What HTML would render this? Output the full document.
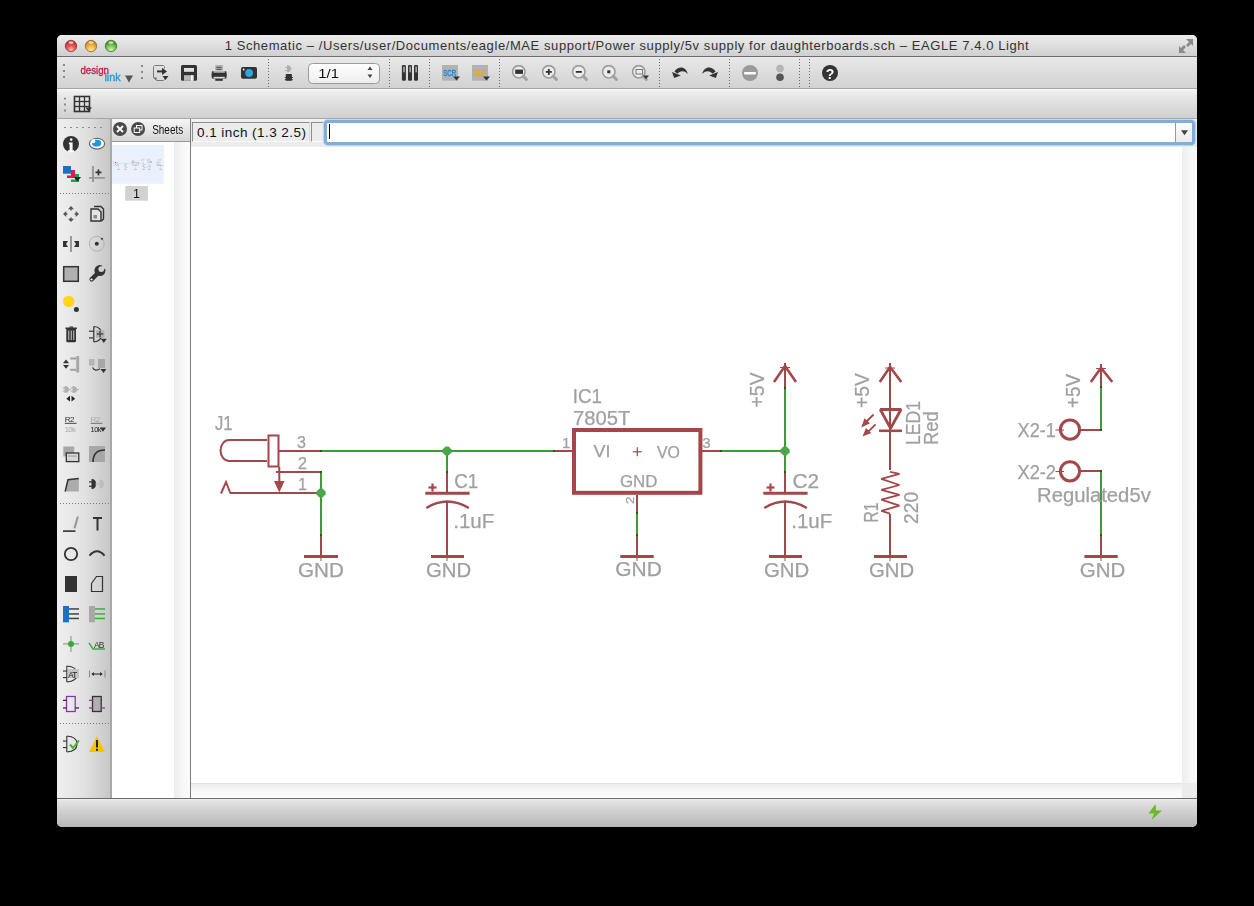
<!DOCTYPE html>
<html><head><meta charset="utf-8">
<style>
*{margin:0;padding:0;box-sizing:border-box}
html,body{width:1254px;height:906px;background:#000;overflow:hidden;font-family:"Liberation Sans",sans-serif}
.a{position:absolute}
#win{left:57px;top:35px;width:1140px;height:792px;background:#e6e6e6;border-radius:5px 5px 5px 5px;overflow:hidden}
#title{left:57px;top:35px;width:1140px;height:22px;background:linear-gradient(#ececec,#d0d0d0);border-bottom:1px solid #6f6f6f;border-radius:5px 5px 0 0}
#ttext{left:57px;top:38px;width:1140px;text-align:center;font-size:13px;color:#333;letter-spacing:0.58px;white-space:nowrap}
#tb1{left:57px;top:57px;width:1140px;height:32px;background:linear-gradient(#e8e8e8,#d2d2d2);border-bottom:1px solid #a6a6a6}
#tb2{left:57px;top:89px;width:1140px;height:30px;background:linear-gradient(#fafafa 0,#f0f0f0 2px,#e6e6e6 8px,#d0d0d0);border-bottom:1px solid #a6a6a6}
#pal{left:57px;top:119px;width:54px;height:679px;background:linear-gradient(90deg,#efefef 0,#e2e2e2 50%,#c6c6c6 100%)}
#sheets{left:110px;top:119px;width:81px;height:679px;background:#fff;border-left:2px solid #a8a8a8;border-right:1px solid #7c7c7c}
#shhead{left:112px;top:119px;width:78px;height:23px;background:linear-gradient(#f6f6f6,#d6d6d6);border-bottom:1px solid #9a9a9a}
#shstrip{left:174px;top:142px;width:16px;height:656px;background:linear-gradient(90deg,#ececec,#f8f8f8 60%,#fbfbfb)}
#cmd{left:191px;top:119px;width:1006px;height:28px;background:linear-gradient(#f6f6f6 0,#ececec 3px,#ececec)}
#canvas{left:191px;top:147px;width:991px;height:636px;background:#fff}
#vscroll{left:1182px;top:147px;width:15px;height:636px;background:linear-gradient(90deg,#ededed,#f6f6f6 50%,#fafafa)}
#hscroll{left:191px;top:783px;width:991px;height:15px;background:linear-gradient(#ededed,#f8f8f8 50%,#fcfcfc);border-top:1px solid #e2e2e2}
#corner{left:1182px;top:783px;width:15px;height:15px;background:#ececec}
#status{left:57px;top:798px;width:1140px;height:29px;background:linear-gradient(#f0f0f0 0,#e2e2e2 2px,#b6b6b6);border-top:1px solid #6b6b6b;border-radius:0 0 5px 5px}
.fld{background:#ececec;border-top:1px solid #8e8e8e;border-left:1px solid #8e8e8e;border-right:1px solid #dcdcdc;border-bottom:1px solid #fafafa}
#grid{left:192px;top:122px;width:118px;height:20px;font-size:13.5px;color:#111;padding:2px 0 0 4px;letter-spacing:0.45px;white-space:nowrap;line-height:16px}
#fld2{left:311px;top:122px;width:13px;height:20px}
#input{left:324px;top:120px;width:871px;height:25px;border:3px solid #7eaedb;border-radius:4px;background:#fff;box-shadow:0 0 1px 1px #b8d3ee}
#ddbtn{left:1175px;top:123px;width:17px;height:19px;border-left:1px solid #9a9a9a;background:linear-gradient(#fdfdfd,#ebebeb);border-radius:0 3px 3px 0}
#cursor{left:329px;top:124px;width:1px;height:15px;background:#000}
.t{position:absolute;white-space:nowrap;line-height:1}
</style></head><body>
<div id="win" class="a"></div>
<div id="title" class="a"></div>
<div id="ttext" class="a">1 Schematic – /Users/user/Documents/eagle/MAE support/Power supply/5v supply for daughterboards.sch – EAGLE 7.4.0 Light</div>
<div id="tb1" class="a"></div>
<div id="tb2" class="a"></div>
<div id="pal" class="a"></div>
<div id="sheets" class="a"></div>
<div id="shhead" class="a"></div>
<div id="shstrip" class="a"></div>
<div id="cmd" class="a"></div>
<div id="canvas" class="a"></div>
<div id="vscroll" class="a"></div>
<div id="hscroll" class="a"></div>
<div id="corner" class="a"></div>
<div id="status" class="a"></div>
<div id="grid" class="a fld">0.1 inch (1.3 2.5)</div>
<div id="fld2" class="a fld"></div>
<div id="input" class="a"></div>
<div id="ddbtn" class="a"></div>
<div id="cursor" class="a"></div>
<!--SVG--><svg class="a" style="left:0;top:0;will-change:transform" width="1254" height="906" viewBox="0 0 1254 906">
<defs>
<radialGradient id="gr" cx="50%" cy="85%" r="75%"><stop offset="0" stop-color="#fbc0b8"/><stop offset="0.5" stop-color="#ee5550"/><stop offset="1" stop-color="#b8302c"/></radialGradient>
<radialGradient id="gy" cx="50%" cy="85%" r="75%"><stop offset="0" stop-color="#fde9a0"/><stop offset="0.5" stop-color="#f4b648"/><stop offset="1" stop-color="#c47e1a"/></radialGradient>
<radialGradient id="gg" cx="50%" cy="85%" r="75%"><stop offset="0" stop-color="#d6f3b4"/><stop offset="0.5" stop-color="#80c85a"/><stop offset="1" stop-color="#3c8a28"/></radialGradient>
<symbol id="mag" viewBox="0 0 18 18"><circle cx="7" cy="7" r="6.2" fill="#ececec" stroke="#9c9c9c" stroke-width="1.6"/><line x1="11.3" y1="11.3" x2="14.6" y2="14.6" stroke="#a2a2a2" stroke-width="3" stroke-linecap="round"/></symbol>
<symbol id="hdots" viewBox="0 0 4 20"><rect x="0" y="0" width="2" height="2" fill="#8a8a8a"/><rect x="0" y="6" width="2" height="2" fill="#8a8a8a"/><rect x="0" y="12" width="2" height="2" fill="#8a8a8a"/></symbol>
<pattern id="vdot" width="3" height="3" patternUnits="userSpaceOnUse"><rect width="1" height="1" fill="#6a6a6a"/></pattern>
<pattern id="hdot" width="3" height="3" patternUnits="userSpaceOnUse"><rect width="1" height="1" fill="#7a7a7a"/></pattern>
<linearGradient id="spin" x1="0" y1="0" x2="0" y2="1"><stop offset="0" stop-color="#ffffff"/><stop offset="1" stop-color="#ededed"/></linearGradient><pattern id="pdot6" width="6" height="2" patternUnits="userSpaceOnUse"><rect width="2" height="1" fill="#8a8a8a"/></pattern></defs>
<!-- traffic lights -->
<circle cx="71" cy="46" r="5.7" fill="url(#gr)" stroke="#8e3532" stroke-width="0.8"/>
<circle cx="91" cy="46" r="5.7" fill="url(#gy)" stroke="#9a6a1c" stroke-width="0.8"/>
<circle cx="111" cy="46" r="5.7" fill="url(#gg)" stroke="#3a7226" stroke-width="0.8"/>
<ellipse cx="71" cy="42.6" rx="2.6" ry="1.3" fill="#fff" opacity="0.65"/>
<ellipse cx="91" cy="42.6" rx="2.6" ry="1.3" fill="#fff" opacity="0.65"/>
<ellipse cx="111" cy="42.6" rx="2.6" ry="1.3" fill="#fff" opacity="0.65"/>
<!-- fullscreen -->
<path d="M1186,39 L1193,39 L1193,46 L1191,44 L1188,47 L1186,45 L1189,42 Z" fill="#8a8a8a"/>
<path d="M1179,46 L1181,48 L1184,45 L1186,47 L1183,50 L1186,53 L1179,53 Z" fill="#8a8a8a"/>
<!-- toolbar1 -->
<use href="#hdots" x="63" y="64" width="4" height="20"/>
<text x="80.4" y="73.5" font-family="Liberation Sans" font-size="11.5" fill="#c4204c" stroke="#c4204c" stroke-width="0.35" textLength="28.6" lengthAdjust="spacingAndGlyphs">design</text>
<text x="104.4" y="81" font-family="Liberation Sans" font-size="11" fill="#2a98cc" stroke="#2a98cc" stroke-width="0.35" textLength="16.2" lengthAdjust="spacingAndGlyphs">link</text>
<path d="M125,75.5 L133,75.5 L129,82.5 Z" fill="#555"/>
<use href="#hdots" x="141" y="65" width="4" height="20"/>
<!-- open -->
<path d="M164.5,68.5 L164.5,66.5 L163.5,65.5 L154.5,65.5 L153.5,66.5 L153.5,77.5 L156.5,80.5 L163.5,80.5 L164.5,79.5 L164.5,76.5" fill="none" stroke="#7a7a7a" stroke-width="1"/>
<path d="M153.5,77.5 L156.5,77.5 L156.5,80.5 Z" fill="#666"/>
<rect x="157" y="70.4" width="6" height="2" fill="#333"/>
<path d="M162,67.8 L167,71.4 L162,75 Z" fill="#333"/>
<path d="M162.5,76 L168.5,76 L165.5,80 Z" fill="#333"/>
<!-- save -->
<rect x="181" y="65" width="16" height="15.8" rx="1.5" fill="#333"/>
<rect x="184" y="68" width="10" height="3.8" fill="#e2e2e2"/>
<rect x="184" y="75.2" width="10" height="5.6" fill="#b8b8b8"/>
<rect x="191" y="75.2" width="1.8" height="5.6" fill="#f4f4f4"/>
<!-- print -->
<rect x="215.3" y="65.2" width="7.5" height="5.2" fill="#a8a8a8"/>
<rect x="216.5" y="66.9" width="5" height="1" fill="#555"/>
<rect x="216.5" y="68.9" width="5" height="1" fill="#555"/>
<path d="M212,71.3 L226.3,71.3 Q227.3,74.8 226.3,78.6 L212,78.6 Q211,74.8 212,71.3 Z" fill="#333"/>
<rect x="213.5" y="71.3" width="11.3" height="1.3" fill="#d6d6d6"/>
<rect x="213.5" y="76.8" width="11.3" height="1.3" fill="#d6d6d6"/>
<rect x="215.3" y="79" width="7.5" height="1.8" fill="#333"/>
<!-- camera -->
<rect x="241" y="67" width="16" height="11.8" rx="1.8" fill="#333"/>
<circle cx="249.1" cy="73" r="3.9" fill="#2aa6e2"/>
<circle cx="243.6" cy="69.5" r="0.9" fill="#fff"/>
<line x1="268.5" y1="59" x2="268.5" y2="88" stroke="#6a6a6a" stroke-width="1" stroke-dasharray="1 2"/>
<!-- part -->
<path d="M287,65.2 Q291,65.5 291,68.7 Q291,72 287,72.2 Z" fill="#acacac"/>
<rect x="284.8" y="67" width="2.4" height="0.9" fill="#b8b8b8"/><rect x="284.8" y="70.1" width="2.4" height="0.9" fill="#b8b8b8"/><rect x="290.5" y="68.4" width="2" height="0.8" fill="#c0c0c0"/>
<rect x="285.8" y="73.9" width="6.1" height="6.9" rx="0.5" fill="#333"/>
<rect x="284.8" y="77" width="8" height="1" fill="#333"/><rect x="284.8" y="79.2" width="8" height="1" fill="#333"/>
<!-- spinbox -->
<rect x="308.5" y="63.5" width="71" height="20" rx="4" fill="url(#spin)" stroke="#9a9a9a" stroke-width="1"/>
<text x="318.3" y="78" font-family="Liberation Sans" font-size="13.5" fill="#111" textLength="20.7" lengthAdjust="spacingAndGlyphs">1/1</text>
<path d="M367.5,70 L372.5,70 L370,66.5 Z" fill="#444"/>
<path d="M367.5,74.5 L372.5,74.5 L370,78 Z" fill="#444"/>
<line x1="389.5" y1="59" x2="389.5" y2="88" stroke="#6a6a6a" stroke-width="1" stroke-dasharray="1 2"/>
<!-- library -->
<rect x="401.9" y="65" width="4" height="15.7" rx="1.2" fill="#333"/>
<rect x="408" y="65" width="4" height="15.7" rx="1.2" fill="#333"/>
<rect x="414" y="65" width="4" height="15.7" rx="1.2" fill="#333"/>
<rect x="403.5" y="66.5" width="1" height="5.8" fill="#f0f0f0"/>
<rect x="409.6" y="66.5" width="1" height="5.8" fill="#f0f0f0"/>
<rect x="415.6" y="66.5" width="1" height="5.8" fill="#f0f0f0"/>
<line x1="429.5" y1="59" x2="429.5" y2="88" stroke="#6a6a6a" stroke-width="1" stroke-dasharray="1 2"/>
<!-- SCR ULP -->
<rect x="442" y="65" width="16" height="15.7" fill="#b2b2b2"/>
<text x="443.2" y="76" font-family="Liberation Sans" font-size="8.5" fill="#1a80d2" stroke="#1a80d2" stroke-width="0.3" textLength="13" lengthAdjust="spacingAndGlyphs">SCR</text>
<path d="M453,76.5 L460,76.5 L456.5,80.5 Z" fill="#333"/>
<rect x="472" y="65" width="16" height="15.7" fill="#b2b2b2"/>
<text x="473" y="76" font-family="Liberation Sans" font-size="8.5" fill="#f5a01c" stroke="#f5a01c" stroke-width="0.3" textLength="13" lengthAdjust="spacingAndGlyphs">ULP</text>
<path d="M483,76.5 L490,76.5 L486.5,80.5 Z" fill="#333"/>
<line x1="499.5" y1="59" x2="499.5" y2="88" stroke="#6a6a6a" stroke-width="1" stroke-dasharray="1 2"/>
<!-- zooms -->
<use href="#mag" x="511.8" y="64.8" width="18" height="18"/>
<rect x="515.2" y="69.6" width="7.8" height="4.3" fill="#333"/>
<use href="#mag" x="541.8" y="64.8" width="18" height="18"/>
<rect x="545.8" y="71" width="6" height="1.8" fill="#333"/><rect x="547.9" y="68.9" width="1.8" height="6" fill="#333"/>
<use href="#mag" x="571.8" y="64.8" width="18" height="18"/>
<rect x="575.8" y="71" width="6" height="1.8" fill="#333"/>
<use href="#mag" x="601.8" y="64.8" width="18" height="18"/>
<rect x="607.3" y="70.3" width="3" height="3" fill="#333"/>
<use href="#mag" x="631.8" y="64.8" width="18" height="18"/>
<rect x="636" y="69.5" width="6.6" height="4.5" fill="none" stroke="#777" stroke-width="1"/>
<path d="M643,75.5 L649,75.5 L646,79 Z" fill="#333"/>
<line x1="659.5" y1="59" x2="659.5" y2="88" stroke="#6a6a6a" stroke-width="1" stroke-dasharray="1 2"/>
<!-- undo redo -->
<path d="M687.8,74 C686.5,68.5 682,66.2 677.5,68.5 C676,69.3 675,70.5 674.5,71.5 L677.5,73.8 C679.5,71 684,70 687.8,74 Z" fill="#333"/>
<path d="M672,72 L674.2,78 L680.8,75.4 Z" fill="#333"/>
<g transform="translate(1390,0) scale(-1,1)">
<path d="M687.8,74 C686.5,68.5 682,66.2 677.5,68.5 C676,69.3 675,70.5 674.5,71.5 L677.5,73.8 C679.5,71 684,70 687.8,74 Z" fill="#333"/>
<path d="M672,72 L674.2,78 L680.8,75.4 Z" fill="#333"/>
</g>
<line x1="729.5" y1="59" x2="729.5" y2="88" stroke="#6a6a6a" stroke-width="1" stroke-dasharray="1 2"/>
<!-- stop go -->
<circle cx="750" cy="73" r="8" fill="#9a9a9a"/>
<rect x="744" y="72" width="12" height="2.6" rx="1" fill="#fff"/>
<circle cx="780" cy="68.5" r="3.8" fill="#b4b4b4"/>
<circle cx="780" cy="77.3" r="3.8" fill="#555"/>
<line x1="799.5" y1="59" x2="799.5" y2="88" stroke="#6a6a6a" stroke-width="1" stroke-dasharray="1 2"/>
<line x1="809.5" y1="59" x2="809.5" y2="88" stroke="#6a6a6a" stroke-width="1" stroke-dasharray="1 2"/>
<!-- help -->
<circle cx="830" cy="73" r="8" fill="#333"/>
<text x="825.7" y="79" font-family="Liberation Sans" font-size="14" font-weight="bold" fill="#fff">?</text>
<!-- toolbar2 -->
<use href="#hdots" x="64" y="97.5" width="4" height="20"/>
<rect x="74.5" y="96.5" width="15" height="15" fill="none" stroke="#333" stroke-width="1.6"/>
<line x1="79.5" y1="96.5" x2="79.5" y2="111.5" stroke="#333" stroke-width="1.3"/>
<line x1="84.5" y1="96.5" x2="84.5" y2="111.5" stroke="#333" stroke-width="1.3"/>
<line x1="74.5" y1="101.5" x2="89.5" y2="101.5" stroke="#333" stroke-width="1.3"/>
<line x1="74.5" y1="106.5" x2="89.5" y2="106.5" stroke="#333" stroke-width="1.3"/>
<path d="M85.5,107.5 L92,107.5 L88.5,111.5 Z" fill="#333"/>
<!-- palette -->
<line x1="64" y1="127.5" x2="104" y2="127.5" stroke="#8a8a8a" stroke-width="1" stroke-dasharray="2 4"/>
<!-- info -->
<circle cx="71" cy="144" r="8" fill="#333"/>
<circle cx="71.2" cy="139.6" r="1.3" fill="#fff"/>
<path d="M68.8,142.6 L72.6,142.6 L72.6,150.3 L74.2,150.3 L74.2,152.2 L67.8,152.2 L67.8,150.3 L69.6,150.3 L69.6,144.2 L68.8,144.2 Z" fill="#fff"/>
<!-- eye -->
<ellipse cx="97" cy="143.7" rx="7.6" ry="5.4" fill="#fff" stroke="#6a6a6a" stroke-width="1.2"/>
<ellipse cx="96.6" cy="143.2" rx="4.6" ry="3.4" fill="#1a9ae2"/><circle cx="93.2" cy="141.2" r="2.1" fill="#fff"/>
<!-- layers -->
<rect x="63" y="166" width="8" height="7.7" fill="#2070c0"/>
<path d="M71,170 L75,170 L75,178 L67,178 L67,175.5 L71,175.5 Z" fill="#d81b50"/>
<path d="M75,174 L79,174 L79,182 L71,182 L71,179.5 L75,179.5 Z" fill="#1fa050"/>
<path d="M74,177 L81,177 L77.5,181.5 Z" fill="#222"/>
<!-- mark -->
<rect x="92" y="166" width="2" height="16" fill="#9a9a9a"/>
<rect x="89" y="177" width="16" height="1.8" fill="#9a9a9a"/>
<rect x="95.5" y="171.5" width="6" height="1.7" fill="#333"/><rect x="97.6" y="169.4" width="1.7" height="6" fill="#333"/>
<line x1="60" y1="193.5" x2="110" y2="193.5" stroke="#7a7a7a" stroke-width="1" stroke-dasharray="1 2"/>
<!-- move -->
<g fill="#555">
<path d="M71,206 L74,209.3 L68,209.3 Z"/><path d="M71,222 L74,218.7 L68,218.7 Z"/>
<path d="M63,214 L66.3,211 L66.3,217 Z"/><path d="M79,214 L75.7,211 L75.7,217 Z"/>
<rect x="70.3" y="209" width="1.4" height="1.5"/><rect x="70.3" y="217.5" width="1.4" height="1.5"/>
<rect x="66" y="213.3" width="1.5" height="1.4"/><rect x="74.5" y="213.3" width="1.5" height="1.4"/>
</g>
<!-- copy -->
<path d="M94,206.5 L101,206.5 L103.5,209 L103.5,219 L101.5,221" fill="none" stroke="#333" stroke-width="1.4"/>
<path d="M91,209 L98,209 L101,212 L101,221 L91,221 Z" fill="#e4e4e4" stroke="#333" stroke-width="1.4"/>
<rect x="93.5" y="215" width="3.5" height="3.5" fill="#888"/>
<!-- mirror -->
<rect x="70" y="236" width="2" height="16" fill="#9a9a9a"/>
<path d="M63,241 L68,241 L66,244 L68,247 L63,247 Z" fill="#333"/>
<path d="M79,241 L74,241 L76,244 L74,247 L79,247 Z" fill="#333"/>
<!-- rotate -->
<circle cx="96.8" cy="243.7" r="7.4" fill="none" stroke="#a8a8a8" stroke-width="0.8"/>
<circle cx="96.8" cy="243.7" r="2" fill="#333"/>
<path d="M100.5,238.5 L103.2,237.8 L102.2,240.6 Z" fill="#333"/>
<!-- group -->
<rect x="63.7" y="266.7" width="14.6" height="14.6" fill="#b0b0b0" stroke="#333" stroke-width="1.5"/>
<!-- wrench -->
<mask id="wm" maskUnits="userSpaceOnUse" x="85" y="260" width="25" height="25"><rect x="85" y="260" width="25" height="25" fill="#fff"/><circle cx="101.3" cy="269.1" r="2.9" fill="#000"/><path d="M101.3,269.1 L103.5,262 L110,268.5 Z" fill="#000"/></mask>
<g mask="url(#wm)"><line x1="91.6" y1="279.4" x2="97.5" y2="273.5" stroke="#333" stroke-width="4.4" stroke-linecap="round"/><circle cx="99.9" cy="270.6" r="5.5" fill="#333"/></g>
<circle cx="91.5" cy="279.5" r="1.1" fill="#fff"/>
<!-- smash dot -->
<circle cx="68.7" cy="301.4" r="5.7" fill="#ffd518"/>
<circle cx="76.4" cy="309.4" r="2.5" fill="#333"/>
<!-- delete -->
<path d="M65.5,327.5 L76.8,327.5 L76.8,329 L76,329 L76,341 Q76,342.2 74.8,342.2 L67.5,342.2 Q66.3,342.2 66.3,341 L66.3,329 L65.5,329 Z" fill="#333"/>
<rect x="69.5" y="326.5" width="3.5" height="1.2" fill="#333"/>
<rect x="68.2" y="330.5" width="1.1" height="9.5" fill="#bdbdbd"/><rect x="70.7" y="330.5" width="1.1" height="9.5" fill="#bdbdbd"/><rect x="73.2" y="330.5" width="1.1" height="9.5" fill="#bdbdbd"/>
<!-- add -->
<path d="M93.8,326.5 Q101.5,327 101.5,334.3 Q101.5,341.5 93.8,342" fill="none" stroke="#333" stroke-width="1.2"/>
<line x1="93.8" y1="326.5" x2="93.8" y2="342" stroke="#333" stroke-width="1.2"/>
<rect x="89" y="330.6" width="4.8" height="1.2" fill="#333"/><rect x="89" y="337.3" width="4.8" height="1.2" fill="#333"/>
<rect x="96" y="330.3" width="8.5" height="7.5" fill="#b4b4b4"/>
<rect x="96.8" y="333.3" width="6.5" height="1.4" fill="#444"/><rect x="99.3" y="330.8" width="1.4" height="6.5" fill="#444"/>
<path d="M100.8,338.8 L106.8,338.8 L103.8,343 Z" fill="#333"/>
<!-- pinswap -->
<path d="M66,359.5 L69,363.3 L63,363.3 Z" fill="#333"/><path d="M66,368.8 L69,365 L63,365 Z" fill="#333"/>
<rect x="70.2" y="357.5" width="6" height="2" fill="#a0a0a0"/><rect x="70.2" y="368.8" width="6" height="2" fill="#a0a0a0"/>
<rect x="76.2" y="356" width="3" height="16.5" fill="#a8a8a8"/>
<!-- gateswap -->
<rect x="89" y="359" width="5.5" height="6.5" fill="#b4b4b4"/>
<rect x="98" y="359" width="7" height="9" fill="#a8a8a8"/>
<path d="M92.5,367.5 Q95,372 100,368.8" fill="none" stroke="#333" stroke-width="1.2"/>
<path d="M100.5,369 L106.5,369 L103.5,373 Z" fill="#333"/>
<!-- replace -->
<path d="M64.5,386 Q69,386 69,389.5 Q69,393 64.5,393 Z" fill="#b0b0b0"/><rect x="62.5" y="387.5" width="2.5" height="1" fill="#b0b0b0"/><rect x="62.5" y="390.5" width="2.5" height="1" fill="#b0b0b0"/><rect x="68.5" y="389" width="2" height="1" fill="#b0b0b0"/>
<path d="M72.5,386 Q77,386 77,389.5 Q77,393 72.5,393 Z" fill="#b0b0b0"/><rect x="70.5" y="387.5" width="2.5" height="1" fill="#b0b0b0"/><rect x="70.5" y="390.5" width="2.5" height="1" fill="#b0b0b0"/><rect x="76.5" y="389" width="2.5" height="1" fill="#b0b0b0"/>
<path d="M66.3,398.7 L70,395.8 L70,401.6 Z" fill="#222"/><path d="M75.2,398.7 L71.5,395.8 L71.5,401.6 Z" fill="#222"/>
<!-- name value -->
<text x="64.8" y="422" font-family="Liberation Sans" font-size="8" fill="#333" letter-spacing="-0.5">R2</text>
<rect x="64.8" y="422.8" width="11.8" height="1.1" fill="#555"/>
<text x="64.8" y="432" font-family="Liberation Sans" font-size="7.5" fill="#a8a8a8" letter-spacing="-0.6">10k</text>
<text x="90.6" y="422" font-family="Liberation Sans" font-size="8" fill="#a8a8a8" letter-spacing="-0.5">R2</text>
<rect x="90.6" y="422.8" width="11.8" height="1.1" fill="#777"/>
<text x="90.6" y="432" font-family="Liberation Sans" font-size="7.5" fill="#222" letter-spacing="-0.6">10k</text>
<path d="M99.8,427.5 L106,427.5 L103,431.8 Z" fill="#333"/>
<!-- smash -->
<rect x="63.3" y="446.5" width="11" height="10" fill="#a8a8a8"/>
<rect x="66.3" y="453" width="12.5" height="8.6" fill="#d8d8d8" stroke="#333" stroke-width="1.3"/>
<rect x="68" y="455.5" width="9" height="1.1" fill="#a0a0a0"/>
<!-- miter -->
<rect x="89" y="446" width="16" height="16" fill="#a8a8a8"/>
<path d="M93,462 Q93,450 105,450" fill="none" stroke="#333" stroke-width="1.6"/>
<!-- split -->
<path d="M65.2,491.5 L68,479.8 L78.8,478.5 L78.8,491.5 Z" fill="#acacac"/>
<path d="M65.2,491.5 L68,479.8 L78.8,478.5" fill="none" stroke="#333" stroke-width="1.5"/>
<!-- invoke -->
<path d="M91.5,479 Q96,479 96,484 Q96,489 91.5,489 Z" fill="#333"/><rect x="89" y="481.3" width="3" height="1.2" fill="#333"/><rect x="89" y="485.7" width="3" height="1.2" fill="#333"/>
<path d="M99.5,479.5 Q104,479.5 104,484 Q104,488.5 99.5,488.5 Z" fill="#bdbdbd"/><rect x="95.5" y="483.5" width="4" height="1.2" fill="#bdbdbd"/>
<line x1="60" y1="503.5" x2="110" y2="503.5" stroke="#7a7a7a" stroke-width="1" stroke-dasharray="1 2"/>
<!-- wire text -->
<rect x="63" y="530.3" width="12.5" height="1.6" fill="#333"/>
<path d="M76.8,516.6 Q78.2,516 78.9,517 L75.6,528.2 L73.8,528.6 L73.6,527.2 Z" fill="#9a9a9a"/>
<path d="M93,517 L102,517 L102,519 L98.5,519 L98.5,530.6 L96.5,530.6 L96.5,519 L93,519 Z" fill="#333"/>
<!-- circle arc -->
<circle cx="71" cy="554" r="6.2" fill="none" stroke="#333" stroke-width="1.8"/>
<path d="M89.5,555.6 Q97,547 104.5,555.6" fill="none" stroke="#333" stroke-width="2"/>
<!-- rect polygon -->
<rect x="65" y="576" width="12" height="16" fill="#333"/>
<path d="M91.5,583.5 L96.5,576.5 L102.5,576.5 L102.5,591.5 L91.5,591.5 Z" fill="none" stroke="#333" stroke-width="1.2"/>
<!-- bus net -->
<rect x="63" y="606" width="6" height="16.3" fill="#1e70c0"/>
<rect x="69" y="608.2" width="10" height="1.5" fill="#444"/><rect x="69" y="613.2" width="10" height="1.5" fill="#444"/><rect x="69" y="617.7" width="10" height="1.5" fill="#444"/>
<rect x="89" y="606" width="6" height="16.3" fill="#a8a8a8"/>
<rect x="95" y="608.2" width="10" height="1.5" fill="#3ab03a"/><rect x="95" y="613.2" width="10" height="1.5" fill="#3ab03a"/><rect x="95" y="617.7" width="10" height="1.5" fill="#3ab03a"/>
<!-- junction label -->
<rect x="63" y="643.2" width="16" height="1.3" fill="#a0a0a0"/><rect x="70.3" y="636" width="1.3" height="16" fill="#a0a0a0"/>
<circle cx="71" cy="643.9" r="3" fill="#2fae3a"/>
<text x="94" y="647.5" font-family="Liberation Sans" font-size="8.5" fill="#333" letter-spacing="-0.8">AB</text>
<path d="M89,643 L93,649 L105,649" fill="none" stroke="#3ab03a" stroke-width="1.4"/>
<!-- attribute dimension -->
<path d="M66.8,666 Q77,666.5 77,674 Q77,681.5 66.8,682" fill="none" stroke="#333" stroke-width="1.1"/>
<line x1="66.8" y1="666" x2="66.8" y2="682" stroke="#333" stroke-width="1.1"/>
<rect x="63" y="670.5" width="3.8" height="1.1" fill="#333"/><rect x="63" y="677" width="3.8" height="1.1" fill="#333"/>
<rect x="68" y="669" width="11" height="9" fill="#c4c4c4"/>
<text x="68.2" y="677.5" font-family="Liberation Sans" font-size="8.2" fill="#222" letter-spacing="-0.7">AT</text>
<rect x="89" y="670.5" width="1" height="7" fill="#888"/><rect x="104.5" y="670.5" width="1" height="7" fill="#888"/>
<rect x="92" y="673.5" width="10" height="1.1" fill="#333"/>
<path d="M91.3,674 L94,672 L94,676 Z" fill="#333"/><path d="M102.8,674 L100,672 L100,676 Z" fill="#333"/>
<!-- purple -->
<rect x="66.5" y="696.5" width="8.7" height="15" fill="none" stroke="#8a3a9a" stroke-width="1.3"/>
<rect x="63" y="699.7" width="3.5" height="1.3" fill="#333"/><rect x="63" y="707.3" width="3.5" height="1.3" fill="#333"/><rect x="75.3" y="707.3" width="3.7" height="1.3" fill="#333"/>
<rect x="92.5" y="696.5" width="8.7" height="15" fill="#b0b0b0" stroke="#333" stroke-width="1.3"/>
<rect x="89" y="699.7" width="3.5" height="1.3" fill="#8a3a9a"/><rect x="89" y="707.3" width="3.5" height="1.3" fill="#8a3a9a"/><rect x="101.3" y="707.3" width="3.7" height="1.3" fill="#8a3a9a"/>
<line x1="60" y1="723.5" x2="110" y2="723.5" stroke="#7a7a7a" stroke-width="1" stroke-dasharray="1 2"/>
<!-- erc -->
<path d="M66.8,736 Q77,736.5 77,744 Q77,751.5 66.8,752" fill="none" stroke="#333" stroke-width="1.1"/>
<line x1="66.8" y1="736" x2="66.8" y2="752" stroke="#333" stroke-width="1.1"/>
<rect x="63" y="740.5" width="3.8" height="1.1" fill="#333"/><rect x="63" y="747" width="3.8" height="1.1" fill="#333"/>
<path d="M70,744.5 L73,748 L79,740.5" fill="none" stroke="#4ab030" stroke-width="2"/>
<path d="M97,736 L105,752 L89,752 Z" fill="#f8c200"/>
<rect x="96" y="740" width="2" height="7.5" fill="#222"/><rect x="96" y="748.8" width="2" height="2" fill="#222"/>
<g id="sch">
<!-- schematic -->
<g fill="none" stroke-width="2" stroke-linecap="butt">
<!-- green nets -->
<g stroke="#3d9b38">
<line x1="320" y1="451" x2="554" y2="451"/>
<line x1="321" y1="472" x2="321" y2="535"/>
<line x1="447" y1="451" x2="447" y2="472"/>
<line x1="721" y1="451" x2="785" y2="451"/>
<line x1="785" y1="388" x2="785" y2="472"/>
<line x1="637" y1="513" x2="637" y2="535"/>
<line x1="1101" y1="387" x2="1101" y2="430"/>
<line x1="1101" y1="471" x2="1101" y2="535"/>
</g>
<g stroke="#a3474a">
<!-- J1 -->
<path d="M267,440 L229,440 A8.5,10.5 0 0 0 229,461 L267,461"/>
<rect x="268.5" y="435.5" width="10" height="31"/>
<line x1="279" y1="451" x2="320" y2="451"/>
<line x1="276" y1="472" x2="321" y2="472"/>
<line x1="279.3" y1="467" x2="279.3" y2="482"/>
<line x1="230" y1="493" x2="321" y2="493"/>
<path d="M221,493.5 L226,482 L230.5,493.5"/>
<line x1="321" y1="535" x2="321" y2="557"/>
<line x1="304" y1="556.5" x2="338" y2="556.5" stroke-width="3"/>
<!-- C1 -->
<line x1="447" y1="472" x2="447" y2="493"/>
<line x1="425.3" y1="493.3" x2="469.6" y2="493.3" stroke-width="3"/>
<path d="M426.3,508 Q447,495 468.8,508" stroke-width="2.6"/>
<line x1="447" y1="501" x2="447" y2="557"/>
<line x1="431" y1="556.5" x2="464" y2="556.5" stroke-width="3"/>
<line x1="428.5" y1="487.5" x2="436.5" y2="487.5" stroke-width="2.2"/>
<line x1="432.5" y1="483.5" x2="432.5" y2="491.5" stroke-width="2.2"/>
<!-- IC1 -->
<rect x="574" y="430" width="126.4" height="62.8" stroke-width="4"/>
<line x1="554" y1="451" x2="572" y2="451"/>
<line x1="702" y1="451" x2="721" y2="451"/>
<line x1="637" y1="495" x2="637" y2="513"/>
<line x1="637" y1="535" x2="637" y2="557"/>
<line x1="620.3" y1="556.5" x2="653.7" y2="556.5" stroke-width="3"/>
<line x1="632.8" y1="451.8" x2="641.8" y2="451.8" stroke-width="1.2"/>
<line x1="637.3" y1="447.3" x2="637.3" y2="456.3" stroke-width="1.2"/>
<!-- C2 -->
<path d="M774,382 L785,366 L796,382" stroke-width="2.6"/>
<line x1="785" y1="363" x2="785" y2="388"/>
<line x1="780" y1="367.5" x2="790" y2="367.5" stroke-width="1"/>
<line x1="785" y1="472" x2="785" y2="493"/>
<line x1="763.3" y1="493.3" x2="807.6" y2="493.3" stroke-width="3"/>
<path d="M764.3,508 Q785,495 806.8,508" stroke-width="2.6"/>
<line x1="785" y1="501" x2="785" y2="557"/>
<line x1="769" y1="556.5" x2="802" y2="556.5" stroke-width="3"/>
<line x1="766.5" y1="487.5" x2="774.5" y2="487.5" stroke-width="2.2"/>
<line x1="770.5" y1="483.5" x2="770.5" y2="491.5" stroke-width="2.2"/>
<!-- LED -->
<path d="M879.8,382 L890,367 L901.3,382" stroke-width="2.6"/>
<line x1="890" y1="363" x2="890" y2="470"/>
<line x1="885" y1="368" x2="895" y2="368" stroke-width="1"/>
<path d="M880.3,409.5 L901,409.5 L890.6,428.3 Z" stroke-width="2.8" stroke-linejoin="bevel"/>
<line x1="879" y1="430.8" x2="902" y2="430.8" stroke-width="2.6"/>
<path d="M890,471.9 L899.5,473.9 L881.3,478.9 L899.5,485 L881.3,489.8 L899.5,494.8 L881.3,499.7 L899.5,505.7 L881.3,510.9 L890,513.6" stroke-width="1.8" stroke-linejoin="bevel"/>
<line x1="890" y1="514" x2="890" y2="557"/>
<line x1="874" y1="556.5" x2="907" y2="556.5" stroke-width="3"/>
<line x1="873.6" y1="414.5" x2="866.5" y2="421.5" stroke-width="1.8"/>
<line x1="875.6" y1="424.3" x2="868" y2="431.8" stroke-width="1.8"/>
<!-- X2 -->
<path d="M1090.8,382 L1101,368 L1112.3,382" stroke-width="2.6"/>
<line x1="1101" y1="364" x2="1101" y2="387"/>
<line x1="1096" y1="368.5" x2="1106" y2="368.5" stroke-width="1"/>
<circle cx="1070" cy="429.6" r="9.6" stroke-width="3"/>
<circle cx="1070" cy="471.3" r="9.6" stroke-width="3"/>
<line x1="1080" y1="430" x2="1102" y2="430"/>
<line x1="1080" y1="471" x2="1102" y2="471"/>
<line x1="1055.5" y1="430" x2="1064" y2="430" stroke-width="1"/>
<line x1="1055.5" y1="471.5" x2="1064" y2="471.5" stroke-width="1"/>
<line x1="1101" y1="535" x2="1101" y2="557"/>
<line x1="1084.4" y1="556.5" x2="1117.7" y2="556.5" stroke-width="3"/>
</g>
</g>
<g fill="#a3474a">
<path d="M274,481 L284.5,481 L279.3,492.5 Z"/>
<path d="M861.2,427.6 L864.5,418.3 L870,423.3 Z"/>
<path d="M862.5,436.6 L866,428 L871.3,433.1 Z"/>
</g>
<rect x="320.5" y="558" width="1" height="3" fill="#a3474a"/><rect x="446.5" y="558" width="1" height="3" fill="#a3474a"/><rect x="636.5" y="558" width="1" height="3" fill="#a3474a"/><rect x="784.5" y="558" width="1" height="3" fill="#a3474a"/><rect x="889.5" y="558" width="1" height="3" fill="#a3474a"/><rect x="1100.5" y="558" width="1" height="3" fill="#a3474a"/>
<g fill="#4ba64a">
<path d="M319.5,488.5 L322.5,488.5 L325.7,491.8 L325.7,494.2 L322.5,497.5 L319.5,497.5 L316.3,494.2 L316.3,491.8 Z"/>
<path d="M445.5,446.5 L448.5,446.5 L451.7,449.8 L451.7,452.2 L448.5,455.5 L445.5,455.5 L442.3,452.2 L442.3,449.8 Z"/>
<path d="M783.5,446.5 L786.5,446.5 L789.7,449.8 L789.7,452.2 L786.5,455.5 L783.5,455.5 L780.3,452.2 L780.3,449.8 Z"/>
</g>
<g fill="#1e5a1e">
<rect x="320" y="450" width="2" height="2"/><rect x="320" y="471" width="2" height="2"/><rect x="446" y="471" width="2" height="2"/>
<rect x="553" y="450" width="2" height="2"/><rect x="720" y="450" width="2" height="2"/><rect x="784" y="387" width="2" height="2"/>
<rect x="784" y="471" width="2" height="2"/><rect x="1100" y="386" width="2" height="2"/><rect x="1100" y="429" width="2" height="2"/>
<rect x="1100" y="470" width="2" height="2"/><rect x="1100" y="534" width="2" height="2"/><rect x="320" y="534" width="2" height="2"/>
<rect x="636" y="512" width="2" height="2"/><rect x="636" y="534" width="2" height="2"/>
</g>
<!-- texts -->
<g font-family="Liberation Sans" fill="#a0a0a0" stroke="#a0a0a0" stroke-width="0.25">
<text x="215" y="430" font-size="20" textLength="17.6" lengthAdjust="spacingAndGlyphs">J1</text>
<text x="297" y="447.8" font-size="16">3</text>
<text x="298" y="469.1" font-size="16">2</text>
<text x="298" y="489.9" font-size="16">1</text>
<text x="298.0" y="576.6" font-size="19.5" textLength="45.8" lengthAdjust="spacingAndGlyphs">GND</text>
<text x="454.2" y="488" font-size="19.5" textLength="24.0" lengthAdjust="spacingAndGlyphs">C1</text>
<text x="453.2" y="527.7" font-size="19.5" textLength="41.0" lengthAdjust="spacingAndGlyphs">.1uF</text>
<text x="426.0" y="576.6" font-size="19.5" textLength="45.2" lengthAdjust="spacingAndGlyphs">GND</text>
<text x="572.8" y="403" font-size="19.5" textLength="29.2" lengthAdjust="spacingAndGlyphs">IC1</text>
<text x="573.0" y="424.5" font-size="19.5" textLength="57.4" lengthAdjust="spacingAndGlyphs">7805T</text>
<text x="593.6" y="456.8" font-size="15.8" textLength="17.0" lengthAdjust="spacingAndGlyphs">VI</text>
<text x="657" y="457.5" font-size="15.8" textLength="23" lengthAdjust="spacingAndGlyphs">VO</text>
<text x="620.0" y="487" font-size="15.8" textLength="37.4" lengthAdjust="spacingAndGlyphs">GND</text>
<text x="562" y="447.5" font-size="15">1</text>
<text x="702.2" y="448" font-size="15">3</text>
<text transform="translate(623,504) rotate(-90)" x="0" y="10.8" font-size="10.5" textLength="7.5" lengthAdjust="spacingAndGlyphs">2</text>
<text x="615.2" y="575.7" font-size="19.5" textLength="46.6" lengthAdjust="spacingAndGlyphs">GND</text>
<text transform="translate(764,407.5) rotate(-90)" font-size="19.5" textLength="35.1" lengthAdjust="spacingAndGlyphs">+5V</text>
<text x="792.4" y="487.8" font-size="19.5" textLength="26.6" lengthAdjust="spacingAndGlyphs">C2</text>
<text x="791.2" y="527.7" font-size="19.5" textLength="41.0" lengthAdjust="spacingAndGlyphs">.1uF</text>
<text x="764.0" y="576.6" font-size="19.5" textLength="45.2" lengthAdjust="spacingAndGlyphs">GND</text>
<text transform="translate(869.3,408) rotate(-90)" font-size="19.5" textLength="34.8" lengthAdjust="spacingAndGlyphs">+5V</text>
<text transform="translate(920,445) rotate(-90)" font-size="19.5" textLength="44.2" lengthAdjust="spacingAndGlyphs">LED1</text>
<text transform="translate(938.3,445) rotate(-90)" font-size="19.5" textLength="33.7" lengthAdjust="spacingAndGlyphs">Red</text>
<text transform="translate(877.8,522.6) rotate(-90)" font-size="19.5" textLength="20.1" lengthAdjust="spacingAndGlyphs">R1</text>
<text transform="translate(918,523.9) rotate(-90)" font-size="19.5" textLength="32.2" lengthAdjust="spacingAndGlyphs">220</text>
<text x="869.0" y="577" font-size="19.5" textLength="45.2" lengthAdjust="spacingAndGlyphs">GND</text>
<text transform="translate(1080.4,408) rotate(-90)" font-size="19.5" textLength="34" lengthAdjust="spacingAndGlyphs">+5V</text>
<text x="1017.6" y="436.5" font-size="19.5" textLength="38.4" lengthAdjust="spacingAndGlyphs">X2-1</text>
<text x="1017.6" y="479.2" font-size="19.5" textLength="38.4" lengthAdjust="spacingAndGlyphs">X2-2</text>
<text x="1037.0" y="502.4" font-size="19.5" textLength="113.8" lengthAdjust="spacingAndGlyphs">Regulated5v</text>
<text x="1079.8" y="577" font-size="19.5" textLength="45.4" lengthAdjust="spacingAndGlyphs">GND</text>
</g>
</g>
<!-- sheets header -->
<circle cx="120" cy="129" r="7" fill="#4a4a4a"/>
<path d="M117,126 L123,132 M123,126 L117,132" stroke="#fff" stroke-width="2"/>
<circle cx="138.1" cy="129" r="7" fill="#4a4a4a"/>
<rect x="136.5" y="125.5" width="5.5" height="4.5" fill="none" stroke="#fff" stroke-width="1"/>
<rect x="134.2" y="128" width="5.5" height="4.5" fill="#4a4a4a" stroke="#fff" stroke-width="1"/>
<text x="152.2" y="134" font-family="Liberation Sans" font-size="12" fill="#111" textLength="31" lengthAdjust="spacingAndGlyphs">Sheets</text>
<!-- thumbnail -->
<rect x="112" y="145" width="52" height="38.7" fill="#e8f1fc"/>
<g opacity="1"><use href="#sch" transform="translate(101.21,139.14) scale(0.0538)" style="vector-effect:non-scaling-stroke"/></g>
<rect x="125.2" y="186" width="22.8" height="14.7" fill="#d2d2d2"/>
<text x="133" y="198" font-family="Liberation Sans" font-size="12.5" fill="#111">1</text>
<path d="M1181,130.3 L1188,130.3 L1184.5,135.2 Z" fill="#444"/>
<!-- status lightning -->
<path d="M1155.5,804 L1148.5,813.5 L1154,813.5 L1151.5,820 L1162,810.5 L1156,810.5 Z" fill="#6cb82a"/>
</svg>

</body></html>
